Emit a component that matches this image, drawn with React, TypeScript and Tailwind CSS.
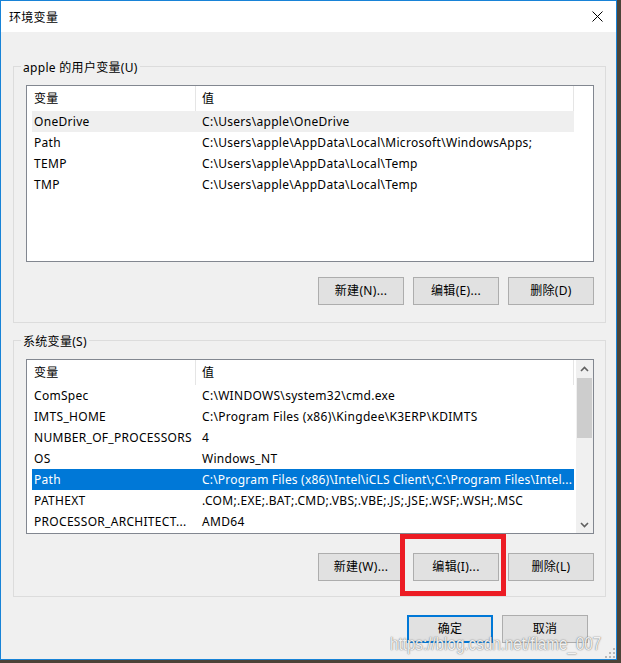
import React from "react";

type Row = [string, string];

const userVars: Row[] = [
  ["OneDrive", "C:\\Users\\apple\\OneDrive"],
  ["Path", "C:\\Users\\apple\\AppData\\Local\\Microsoft\\WindowsApps;"],
  ["TEMP", "C:\\Users\\apple\\AppData\\Local\\Temp"],
  ["TMP", "C:\\Users\\apple\\AppData\\Local\\Temp"],
];

const sysVars: Row[] = [
  ["ComSpec", "C:\\WINDOWS\\system32\\cmd.exe"],
  ["IMTS_HOME", "C:\\Program Files (x86)\\Kingdee\\K3ERP\\KDIMTS"],
  ["NUMBER_OF_PROCESSORS", "4"],
  ["OS", "Windows_NT"],
  ["Path", "C:\\Program Files (x86)\\Intel\\iCLS Client\\;C:\\Program Files\\Intel..."],
  ["PATHEXT", ".COM;.EXE;.BAT;.CMD;.VBS;.VBE;.JS;.JSE;.WSF;.WSH;.MSC"],
  ["PROCESSOR_ARCHITECT...", "AMD64"],
];

const font = "font-['Noto_Sans','Noto_Sans_CJK_SC',sans-serif]";

const Chevron = ({ down }: { down?: boolean }) => (
  <svg width="9" height="6" viewBox="0 0 9 6" className={down ? "rotate-180" : ""}>
    <path d="M1 5 L4.5 1.5 L8 5" fill="none" stroke="#606060" strokeWidth="1.6" />
  </svg>
);

const VarList: React.FC<{
  rows: Row[];
  heightClass: string;
  active: number;
  focused?: boolean;
  scroll?: boolean;
}> = ({ rows, heightClass, active, focused, scroll }) => (
  <div className={`flex border border-[#828790] bg-white overflow-hidden ${heightClass}`}>
    <div className="flex-1 flex flex-col">
      <div className="flex h-[25px] shrink-0 leading-[25px]">
        <div className="w-[169px] pl-[7px] border-r border-[#e5e5e5]">变量</div>
        <div className="w-[378px] pl-[6px] border-r border-[#e5e5e5]">值</div>
      </div>
      {rows.map(([name, value], i) => {
        const on = i === active;
        const tone = on ? (focused ? "bg-[#0078d7] text-white" : "bg-[#efefef]") : "";
        // long values get slightly tighter spacing so the "..." stays visible
        const tight = value.length > 60 ? "tracking-[0.2px]" : "";
        return (
          <div key={name + i} className={`ml-[5px] w-[542px] flex h-[21px] shrink-0 leading-[21px] ${tone}`}>
            <div className="w-[168px] pl-[2px] whitespace-nowrap overflow-hidden">{name}</div>
            <div className={`flex-1 pl-[2px] whitespace-nowrap overflow-hidden ${tight}`}>{value}</div>
          </div>
        );
      })}
    </div>
    {scroll ? (
      <div className="w-[17px] bg-[#f0f0f0] flex flex-col items-center">
        <div className="h-[17px] flex items-center justify-center">
          <Chevron />
        </div>
        <div className="mt-[1px] w-[15px] h-[60px] bg-[#cdcdcd]" />
        <div className="flex-1" />
        <div className="h-[17px] flex items-center justify-center">
          <Chevron down />
        </div>
      </div>
    ) : (
      <div className="w-[17px]" />
    )}
  </div>
);

const Btn: React.FC<{ label: string; primary?: boolean }> = ({ label, primary }) => (
  <div
    className={`w-[86px] h-[28px] flex items-center justify-center bg-[#e1e1e1] ${
      primary ? "border-2 border-[#0078d7]" : "border border-[#adadad]"
    }`}
  >
    {label}
  </div>
);

const Group: React.FC<{ title: string; children: React.ReactNode }> = ({ title, children }) => (
  <div className="relative ml-[12px] w-[593px] h-[257px] border border-[#dcdcdc] pt-[18px] pl-[12px] pr-[11px]">
    <span className="absolute -top-[8px] left-[7px] px-[2px] bg-[#f0f0f0] leading-[17px]">{title}</span>
    {children}
  </div>
);

export default function App() {
  return (
    <div className={`relative w-[621px] h-[663px] overflow-hidden bg-[#4b4338] text-[12px] tracking-[0.3px] text-black ${font}`}>
      <div className="w-[617px] h-[660px] border border-[#1883d7] bg-[#f0f0f0] flex flex-col">
        {/* title bar */}
        <div className="h-[31px] shrink-0 bg-white flex items-center justify-between pl-[8px] pr-[9px]">
          <span className="leading-[17px] pt-[1px]">环境变量</span>
          <svg width="11" height="11" viewBox="0 0 11 11" className="mr-[4px]">
            <path d="M0.5 0.5 L10.5 10.5 M10.5 0.5 L0.5 10.5" stroke="#000" strokeWidth="1" />
          </svg>
        </div>

        <div className="mt-[34px]">
          <Group title="apple 的用户变量(U)">
            <VarList rows={userVars} heightClass="h-[177px]" active={0} />
            <div className="mt-[15px] flex justify-end gap-[9px]">
              <Btn label="新建(N)..." />
              <Btn label="编辑(E)..." />
              <Btn label="删除(D)" />
            </div>
          </Group>
        </div>

        <div className="mt-[17px]">
          <Group title="系统变量(S)">
            <VarList rows={sysVars} heightClass="h-[175px]" active={4} focused scroll />
            <div className="mt-[19px] flex justify-end gap-[9px]">
              <Btn label="新建(W)..." />
              <Btn label="编辑(I)..." />
              <Btn label="删除(L)" />
            </div>
          </Group>
        </div>

        <div className="mt-[18px] flex justify-end gap-[9px] pr-[28px]">
          <Btn label="确定" primary />
          <Btn label="取消" />
        </div>
      </div>

      {/* annotation box */}
      <div className="absolute left-[400px] top-[534px] w-[106px] h-[62px] border-[5px] border-[#ec1c24]" />

      {/* watermark */}
      <div className="absolute left-[390px] top-[632px] w-[226px] overflow-hidden pointer-events-none">
        <span className="inline-block origin-left scale-x-[0.8] whitespace-nowrap tracking-normal text-[19px] leading-[24px] text-white/90 font-['Liberation_Sans',sans-serif] [text-shadow:0_0_1px_rgba(90,90,90,0.9),0_0_2px_rgba(120,120,120,0.6)]">
          https://blog.csdn.net/flame_007
        </span>
      </div>

      {/* size grip */}
      <svg className="absolute left-[605px] top-[648px]" width="11" height="10" viewBox="0 0 11 10">
        <rect x="8" y="0" width="2" height="2" fill="#b8b8b8" />
        <rect x="4" y="4" width="2" height="2" fill="#b8b8b8" />
        <rect x="8" y="4" width="2" height="2" fill="#b8b8b8" />
        <rect x="0" y="8" width="2" height="2" fill="#b8b8b8" />
        <rect x="4" y="8" width="2" height="2" fill="#b8b8b8" />
        <rect x="8" y="8" width="2" height="2" fill="#b8b8b8" />
      </svg>
    </div>
  );
}
